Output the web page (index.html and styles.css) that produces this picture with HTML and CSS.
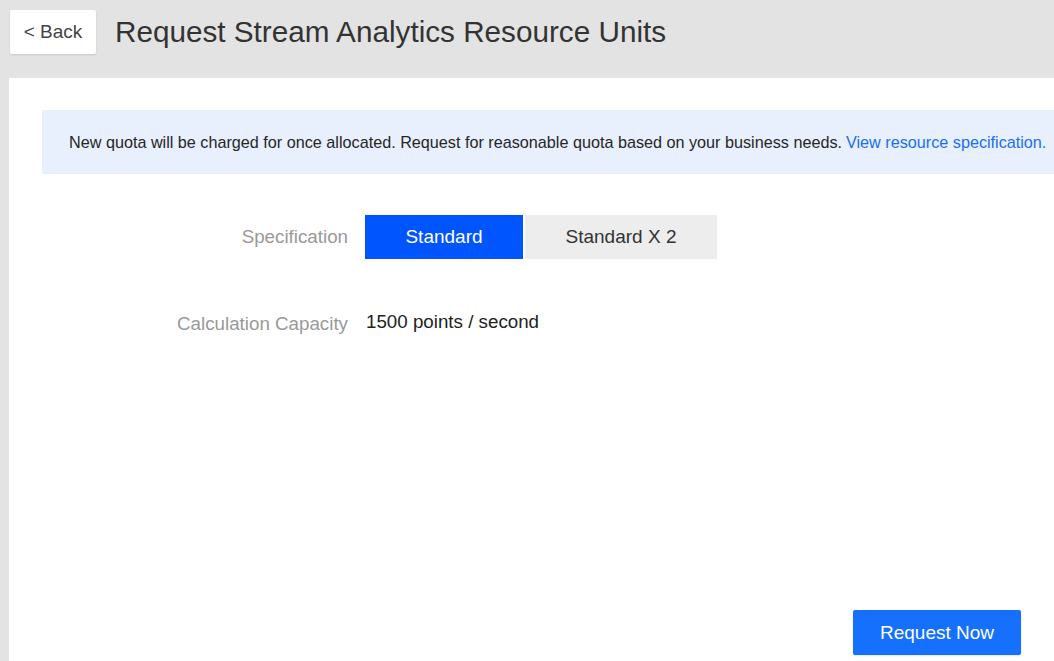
FILE: index.html
```html
<!DOCTYPE html>
<html>
<head>
<meta charset="utf-8">
<link rel="stylesheet" href="styles.css">
</head>
<body>
<div class="page">
  <header class="header">
    <button class="back">&lt; Back</button>
    <h1 class="title">Request Stream Analytics Resource Units</h1>
  </header>
  <main class="panel">
    <div class="notice">New quota will be charged for once allocated. Request for reasonable quota based on your business needs. <a class="link" href="#">View resource specification.</a></div>
    <div class="form">
      <div class="row row-spec">
        <div class="label">Specification</div>
        <div class="seg">
          <button class="seg-btn active">Standard</button>
          <button class="seg-btn">Standard X 2</button>
        </div>
      </div>
      <div class="row row-cap">
        <div class="label">Calculation Capacity</div>
        <div class="value">1500 points / second</div>
      </div>
    </div>
    <div class="actions">
      <button class="submit">Request Now</button>
    </div>
  </main>
</div>
</body>
</html>
```

FILE: styles.css
```css
html, body {
  margin: 0;
  padding: 0;
  height: 100%;
  overflow: hidden;
}
body {
  background: #e3e3e3;
  font-family: "Liberation Sans", Arial, sans-serif;
  color: #333;
}
.page {
  width: 1100px;
  display: flex;
  flex-direction: column;
  height: 100%;
}
.header {
  display: flex;
  align-items: center;
  box-sizing: border-box;
  height: 78px;
  padding: 10px 0 24px 10px;
  gap: 19px;
}
.back {
  width: 86px;
  height: 44px;
  background: #fff;
  border: none;
  border-radius: 2px;
  box-shadow: 0 1px 2px rgba(0,0,0,0.12);
  font-family: inherit;
  font-size: 19px;
  color: #444;
  padding: 0;
}
.title {
  margin: 0;
  font-size: 29.7px;
  font-weight: normal;
  color: #333;
  margin-top: -1px;
}
.panel {
  flex: 1;
  margin-left: 9px;
  background: #fff;
  padding: 32px 0 0 33px;
  display: flex;
  flex-direction: column;
}
.notice {
  background: #e8f0fd;
  height: 64px;
  display: flex;
  align-items: center;
  padding-left: 27px;
  font-size: 16.2px;
  color: #262626;
  white-space: nowrap;
}
.link {
  color: #1a6ef5;
  text-decoration: none;
  margin-left: 4px;
}
.form {
  padding-top: 41px;
  display: flex;
  flex-direction: column;
}
.row {
  display: flex;
  align-items: center;
}
.label {
  width: 306px;
  text-align: right;
  color: #999;
  font-size: 18.75px;
  padding-right: 17px;
}
.seg {
  display: flex;
  gap: 2px;
}
.seg-btn {
  height: 44px;
  border: none;
  border-radius: 0;
  background: #ededed;
  color: #333;
  font-family: inherit;
  font-size: 19px;
  width: 192px;
  padding: 0;
}
.seg-btn.active {
  width: 158px;
  background: #0055ff;
  color: #fff;
}
.row-cap {
  margin-top: 50px;
}
.row-cap .label {
  padding-top: 4px;
}
.value {
  font-size: 18.75px;
  color: #222;
  margin-left: 1px;
}
.actions {
  margin-top: auto;
  padding-left: 811px;
  padding-bottom: 6px;
}
.submit {
  width: 168px;
  height: 45px;
  background: #1470fd;
  color: #fff;
  border: none;
  border-radius: 2px;
  font-family: inherit;
  font-size: 19px;
  box-shadow: 0 1px 2px rgba(0,0,0,0.1);
}
```
